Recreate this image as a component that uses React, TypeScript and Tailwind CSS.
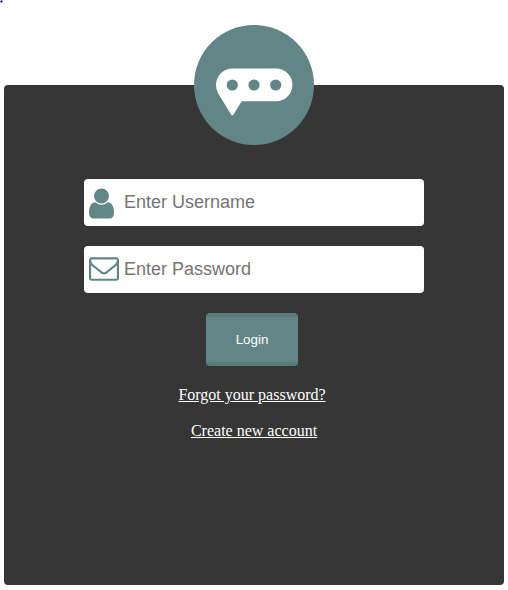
import React from "react";

function UserIcon() {
  return (
    <svg viewBox="256 0 1280 1792" className="mt-[2px] h-[35px] w-[25px]" fill="currentColor" aria-hidden="true">
      <path d="M1536 1399q0 109-62.5 187t-150.5 78h-854q-88 0-150.5-78t-62.5-187q0-85 8.5-160.5t31.5-152 58.5-131 94-89 134.5-34.5q131 128 313 128t313-128q76 0 134.5 34.5t94 89 58.5 131 31.5 152 8.5 160.5zm-256-887q0 159-112.5 271.5t-271.5 112.5-271.5-112.5-112.5-271.5 112.5-271.5 271.5-112.5 271.5 112.5 112.5 271.5z" />
    </svg>
  );
}

function EnvelopeIcon() {
  return (
    <svg viewBox="0 0 1792 1792" className="mb-[3px] size-[30px]" fill="currentColor" aria-hidden="true">
      <path d="M1664 1504v-768q-32 36-69 66-268 206-426 338-51 43-83 67t-86.5 48.5-102.5 24.5h-2q-48 0-102.5-24.5t-86.5-48.5-83-67q-158-132-426-338-37-30-69-66v768q0 13 9.5 22.5t22.5 9.5h1472q13 0 22.5-9.5t9.5-22.5zm0-1051v-24.5l-.5-13-3-12.5-5.5-9-9-7.5-14-2.5h-1472q-13 0-22.5 9.5t-9.5 22.5q0 168 147 284 193 152 401 317 6 5 35 29.5t46 37.5 44.5 31.5 50.5 27.5 43 9h2q20 0 43-9t50.5-27.5 44.5-31.5 46-37.5 35-29.5q208-165 401-317 54-43 100.5-115.5t46.5-131.5zm128-37v1088q0 66-47 113t-113 47h-1472q-66 0-113-47t-47-113v-1088q0-66 47-113t113-47h1472q66 0 113 47t47 113z" />
    </svg>
  );
}

function Logo() {
  return (
    <svg viewBox="0 0 120 120" className="size-[120px] shrink-0" aria-label="Chat">
      <circle cx="60" cy="60" r="60" fill="#628685" />
      <path
        d="M38.5 43.5H82a16.4 16.4 0 0 1 0 32.8H47.7L39.5 89.6Q38.3 91.5 37.1 89.6L24.2 68.5Q22 64.5 22 60A16.5 16.5 0 0 1 38.5 43.5Z"
        fill="#fff"
      />
      <circle cx="38.3" cy="60" r="5.6" fill="#628685" />
      <circle cx="60" cy="60" r="5.6" fill="#628685" />
      <circle cx="81.7" cy="60" r="5.6" fill="#628685" />
    </svg>
  );
}

function Field({ type, placeholder, icon }: { type: string; placeholder: string; icon: React.ReactNode }) {
  return (
    <label className="flex h-[47px] w-[340px] items-center rounded-[4px] bg-white pl-[5px] text-[#628685]">
      <span className="flex w-[35px] shrink-0">{icon}</span>
      <input
        type={type}
        placeholder={placeholder}
        className="h-[45px] min-w-0 flex-1 bg-transparent font-['Liberation_Sans',Arial,sans-serif] text-[18px] text-black outline-none placeholder:text-[#757575]"
      />
    </label>
  );
}

export default function App() {
  return (
    <main className="relative h-[590px] w-[508px] bg-white px-1 pt-[85px] font-['Liberation_Serif','Times_New_Roman',serif]">
      <span className="absolute top-0 left-0 size-[3px] bg-[radial-gradient(circle,#000080_20%,#9999ff_55%,transparent_80%)]" />
      <section className="flex h-[500px] w-[500px] flex-col items-center rounded-[4px] bg-[#363636]">
        <div className="-mt-[60px] mb-[34px]">
          <Logo />
        </div>
        <form className="flex flex-col items-center gap-5">
          <Field type="text" placeholder="Enter Username" icon={<UserIcon />} />
          <Field type="password" placeholder="Enter Password" icon={<EnvelopeIcon />} />
          <button
            type="button"
            className="-ml-1 h-[53px] w-[92px] rounded-[4px] border-y-4 border-[#587a79] bg-[#628685] font-['Liberation_Sans',Arial,sans-serif] text-[13.333px] text-white"
          >
            Login
          </button>
        </form>
        <a href="#" className="mt-5 -ml-1 text-[16px] leading-[18px] text-white underline">
          Forgot your password?
        </a>
        <a href="#" className="mt-[18px] text-[16px] leading-[18px] text-white underline">
          Create new account
        </a>
      </section>
    </main>
  );
}
